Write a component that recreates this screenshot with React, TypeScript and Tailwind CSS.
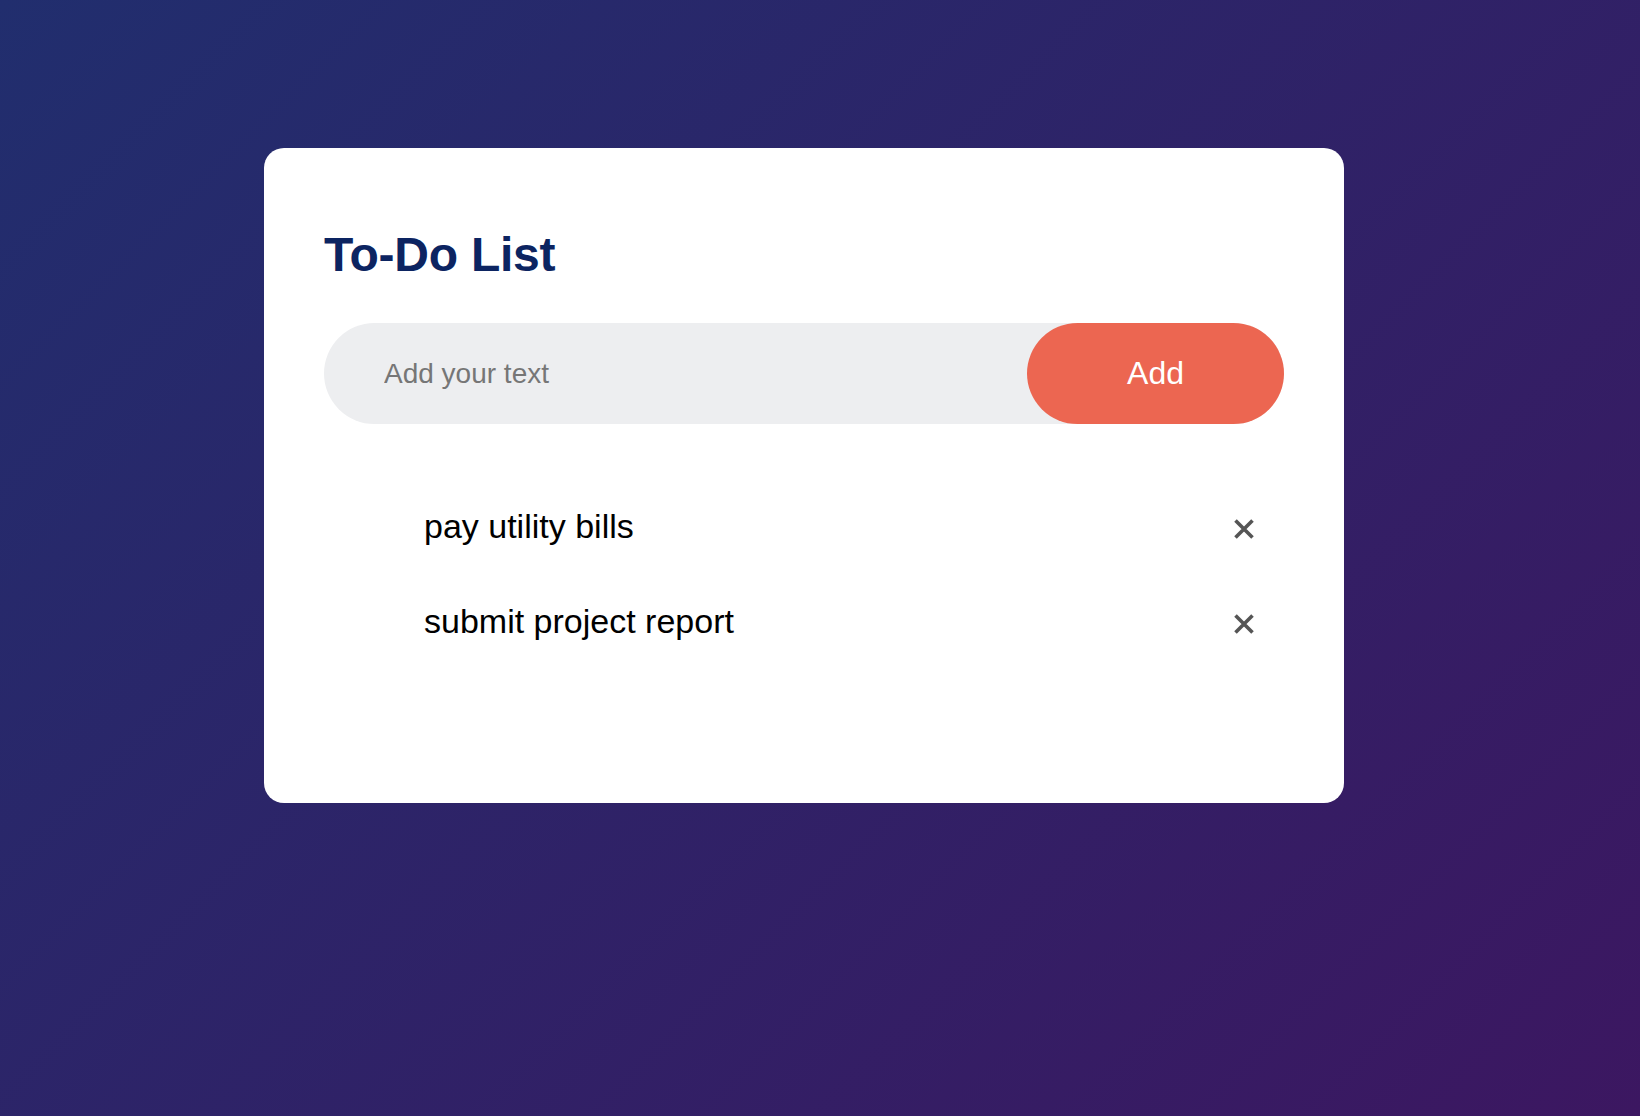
import React, { useState } from "react";

type Task = { id: number; text: string };

// small cross used for deleting a task
const CloseIcon = () => (
  <svg width="22" height="22" viewBox="0 0 22 22" fill="none">
    <path d="M2.5 2.5 L19.5 19.5 M19.5 2.5 L2.5 19.5" stroke="#555555" strokeWidth="3.6" />
  </svg>
);

export default function App() {
  const [tasks, setTasks] = useState<Task[]>([
    { id: 1, text: "pay utility bills" },
    { id: 2, text: "submit project report" },
  ]);
  const [value, setValue] = useState("");

  const addTask = () => {
    if (!value.trim()) return;
    setTasks([...tasks, { id: Date.now(), text: value.trim() }]);
    setValue("");
  };

  return (
    <div
      className="min-h-screen w-full bg-[linear-gradient(135deg,#212e6e,#3c1761)] pl-[264px] pt-[148px]"
      style={{ fontFamily: '"Liberation Sans", Arial, sans-serif' }}
    >
      <div className="w-[1080px] rounded-[20px] bg-white px-[60px] pt-[79px] pb-[135px]">
        <h2 className="mb-[40px] text-[48px] font-bold leading-[56px] tracking-[-0.25px] text-[#0c2461]">
          To-Do List
        </h2>

        <div className="flex items-center rounded-full bg-[#edeef0] pl-[40px]">
          <input
            value={value}
            onChange={(e) => setValue(e.target.value)}
            onKeyDown={(e) => e.key === "Enter" && addTask()}
            placeholder="Add your text"
            className="flex-1 bg-transparent px-[20px] text-[28px] text-[#333] outline-none placeholder:text-[#767676]"
          />
          <button
            onClick={addTask}
            className="rounded-full bg-[#ec6651] px-[100px] py-[32px] text-[32px] leading-[37px] text-white"
          >
            Add
          </button>
        </div>

        <ul className="mt-[54px]">
          {tasks.map((t) => (
            <li key={t.id} className="flex items-center pt-[25px] pb-[24px] pl-[100px]">
              <span className="flex-1 text-[34px] leading-[40px] text-black">{t.text}</span>
              <span
                onClick={() => setTasks(tasks.filter((x) => x.id !== t.id))}
                className="mt-[6px] flex h-[40px] w-[80px] cursor-pointer items-center justify-center"
              >
                <CloseIcon />
              </span>
            </li>
          ))}
        </ul>
      </div>
    </div>
  );
}
